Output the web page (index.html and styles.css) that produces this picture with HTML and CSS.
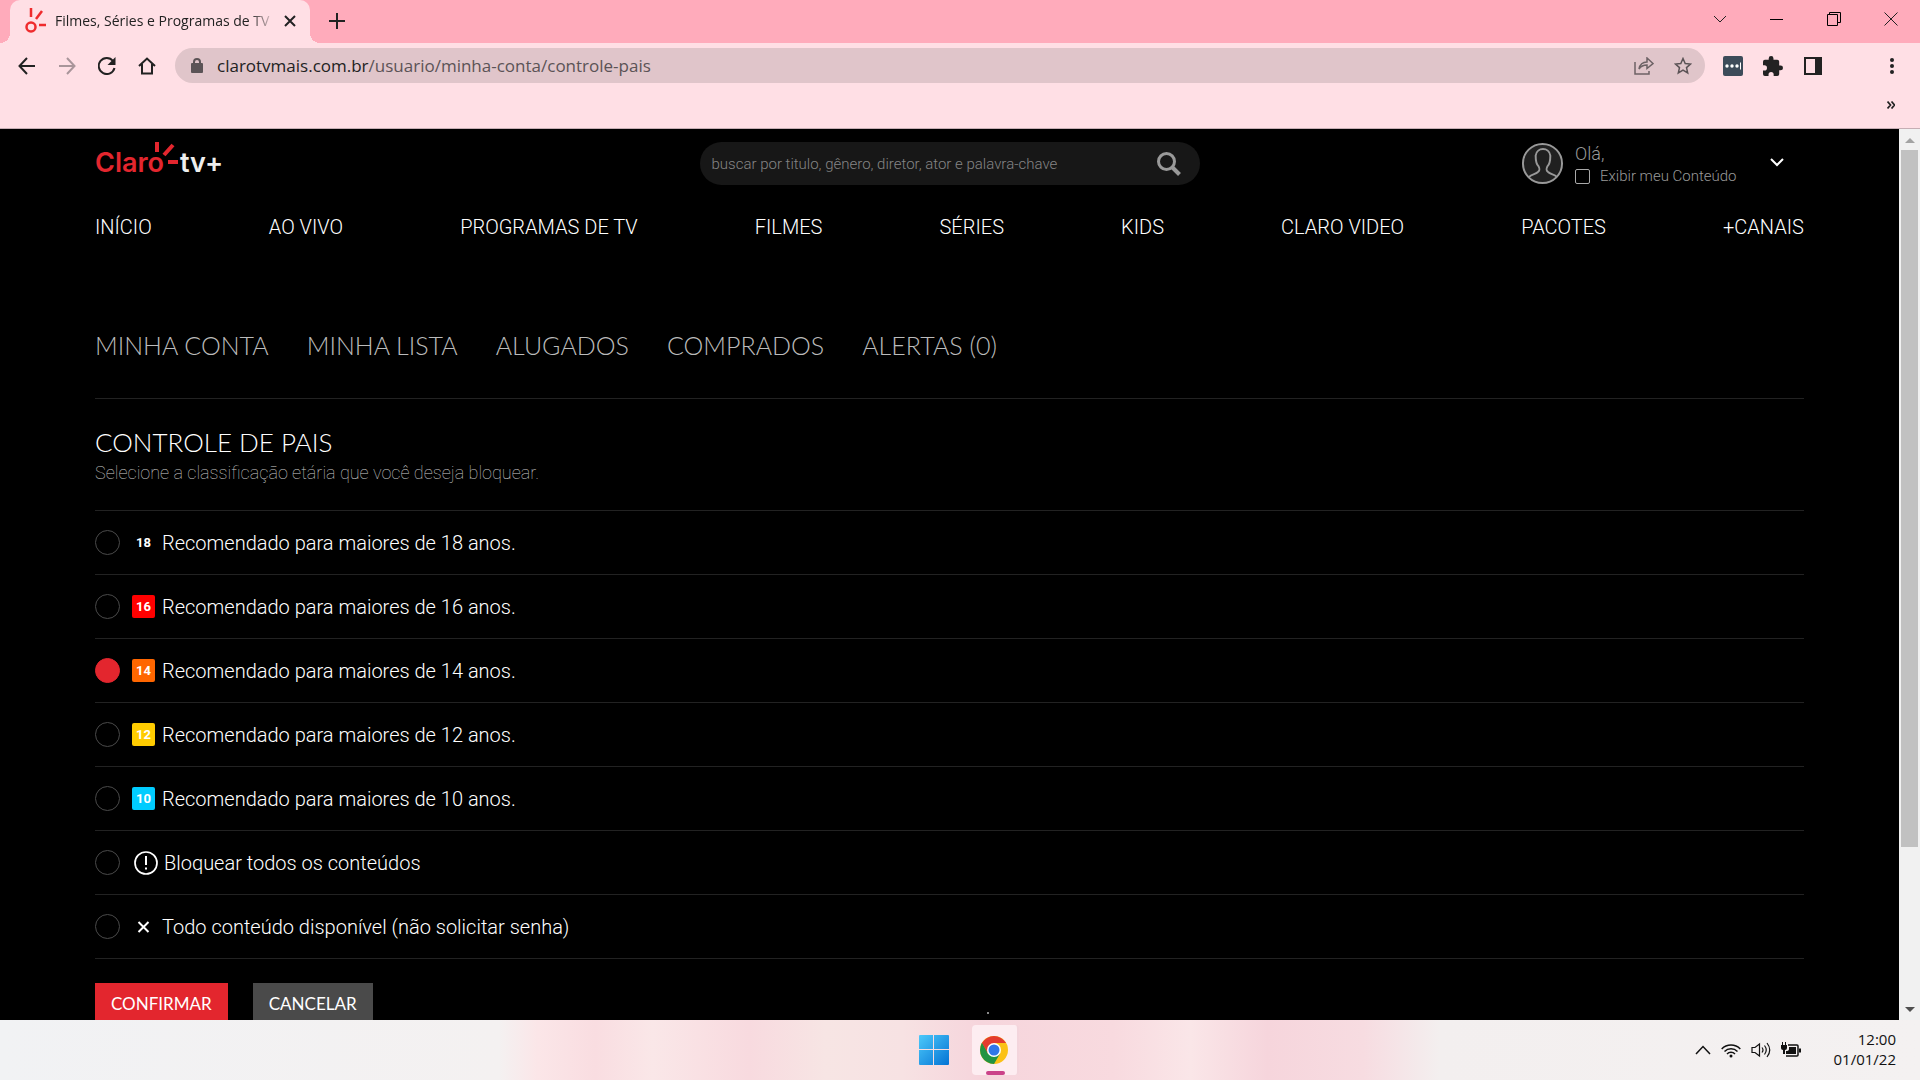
FILE: index.html
```html
<!DOCTYPE html>
<html lang="pt-BR">
<head>
<meta charset="utf-8">
<title>Controle de pais</title>
<link rel="stylesheet" href="styles.css">
</head>
<body>
<div class="desktop">
  <header class="browser">
    <div class="tabstrip">
      <div class="tab">
        <svg class="favicon" width="22" height="28" viewBox="0 0 22 28" fill="none" stroke="#ef2b2d" stroke-width="2.500"><circle cx="6" cy="20" r="4.500"/><path d="M6 1v9M11 12l6-8M14 18h7"/></svg>
        <span class="tab-title">Filmes, Séries e Programas de TV</span>
        <button class="plain" aria-label="Fechar guia"><svg width="12" height="12" viewBox="0 0 12 12" stroke="#222" stroke-width="2"><path d="M1 1l10 10M11 1L1 11"/></svg></button>
      </div>
      <button class="plain new-tab" aria-label="Nova guia"><svg width="16" height="16" viewBox="0 0 16 16" stroke="#222" stroke-width="2"><path d="M8 0v16M0 8h16"/></svg></button>
      <div class="window-controls">
        <button class="plain" aria-label="Pesquisar guias"><svg width="14" height="14" viewBox="0 0 14 14" fill="none" stroke="#222"><path d="M1 4l6 6 6-6"/></svg></button>
        <button class="plain" aria-label="Minimizar"><svg width="14" height="14" viewBox="0 0 14 14" stroke="#000"><path d="M0 7.500h13"/></svg></button>
        <button class="plain" aria-label="Restaurar"><svg width="14" height="14" viewBox="0 0 14 14" fill="none" stroke="#000"><path d="M.5 2.500h10v11H.5zM2.500 2.500v-2h11v10h-3"/></svg></button>
        <button class="plain" aria-label="Fechar"><svg width="14" height="14" viewBox="0 0 14 14" stroke="#222"><path d="M.5.500l13 13M13.500.500l-13 13"/></svg></button>
      </div>
    </div>
    <div class="toolbar">
      <div class="nav-buttons">
        <button class="plain" aria-label="Voltar"><svg width="18" height="18" viewBox="0 0 18 18" fill="none" stroke="#222" stroke-width="2"><path d="M17 9H2M9 1L1.500 9 9 17"/></svg></button>
        <button class="plain" aria-label="Avançar"><svg width="18" height="18" viewBox="0 0 18 18" fill="none" stroke="#a9959a" stroke-width="2"><path d="M1 9h15M9 1l7.500 8L9 17"/></svg></button>
        <button class="plain" aria-label="Recarregar"><svg width="18" height="18" viewBox="0 0 18 18" fill="none" stroke="#222" stroke-width="2"><path d="M15 4a8 8 0 1 0 1.500 7"/><path fill="#222" stroke="none" d="M17.500 0v8h-8z"/></svg></button>
        <button class="plain" aria-label="Página inicial"><svg width="18" height="18" viewBox="0 0 18 18" fill="none" stroke="#222" stroke-width="2"><path d="M1 9l8-7.500L17 9M4 7v9.500h10V7"/></svg></button>
      </div>
      <div class="omnibox">
        <svg width="12" height="16" viewBox="0 0 12 16"><rect y="5" width="12" height="10" rx="1" fill="#5b5356"/><path d="M3 6V4a3 3 0 0 1 6 0v2" fill="none" stroke="#5b5356" stroke-width="2"/></svg>
        <span class="url"><b>clarotvmais.com.br</b>/usuario/minha-conta/controle-pais</span>
        <button class="plain" aria-label="Compartilhar"><svg width="20" height="18" viewBox="0 0 20 18" fill="none" stroke="#6d6265" stroke-width="1.500"><path d="M1 5v12h14v-3M5 12c1-5 4-7 8-7V1l6 5.500-6 5V8c-4 0-6 1-8 4z"/></svg></button>
        <button class="plain" aria-label="Favoritar"><svg width="18" height="18" viewBox="0 0 18 18" fill="none" stroke="#5b5356" stroke-width="1.500"><path d="M9 1.500l2.200 5 5.300.5-4 3.600 1.200 5.400L9 13.200 4.300 16l1.200-5.400-4-3.600 5.300-.5z"/></svg></button>
      </div>
      <div class="extensions">
        <button class="plain" aria-label="Gerenciador de senhas"><svg width="20" height="20" viewBox="0 0 20 20"><rect width="20" height="20" rx="2" fill="#3d4b59"/><g fill="#fff"><circle cx="4" cy="10" r="1.700"/><circle cx="9" cy="10" r="1.700"/><circle cx="14" cy="10" r="1.700"/><path d="M17 6.500h1v7h-1z"/></g></svg></button>
        <button class="plain" aria-label="Extensões"><svg width="20" height="20" viewBox="2 1 21 21" fill="#222"><path d="M20.500 11H19V7a2 2 0 0 0-2-2h-4V3.500a2.500 2.500 0 0 0-5 0V5H4a2 2 0 0 0-2 2v3.800h1.500a2.700 2.700 0 0 1 0 5.400H2V20a2 2 0 0 0 2 2h3.800v-1.500a2.700 2.700 0 0 1 5.400 0V22H17a2 2 0 0 0 2-2v-4h1.500a2.500 2.500 0 0 0 0-5z"/></svg></button>
        <button class="plain" aria-label="Painel lateral"><svg width="20" height="20" viewBox="0 0 20 20"><path fill="#222" fill-rule="evenodd" d="M1 1h18v18H1zM3 3v14h9V3z"/></svg></button>
        <button class="plain menu" aria-label="Menu"><svg width="6" height="18" viewBox="0 0 6 18" fill="#222"><circle cx="3" cy="3" r="2"/><circle cx="3" cy="9" r="2"/><circle cx="3" cy="15" r="2"/></svg></button>
      </div>
    </div>
    <div class="bookmarks"><button class="plain" aria-label="Mais favoritos"><svg width="8" height="8" viewBox="0 0 8 8" fill="none" stroke="#222" stroke-width="1.700"><path d="M.5.500L3.500 4l-3 3.500M4.500.500L7.500 4l-3 3.500"/></svg></button></div>
  </header>

  <div class="viewport">
    <div class="page">
      <div class="site-header">
        <a class="logo" href="#" aria-label="Claro tv+">
          <svg width="136" height="43" viewBox="0 0 136 43"><text class="logo-claro" x="0" y="30">Claro</text><text class="logo-tv" x="85" y="30">tv+</text><path d="M62 0v10M69 13l9-10M73 20h10" stroke="#e3262e" stroke-width="4"/></svg>
        </a>
        <form class="search">
          <input type="search" aria-label="Buscar" placeholder="buscar por titulo, gênero, diretor, ator e palavra-chave">
          <button class="plain" type="button" aria-label="Buscar"><svg width="24" height="24" viewBox="0 0 24 24" fill="none" stroke="#999"><circle cx="9.500" cy="9.500" r="8" stroke-width="3"/><path d="M15.500 15.500l7 7" stroke-width="4"/></svg></button>
        </form>
        <div class="user">
          <svg width="43" height="43" viewBox="0 0 44 44"><circle cx="22" cy="22" r="20" fill="#202020" stroke="#999" stroke-width="2"/><path d="M8 36c3-3 7-3 9-5 3-2 2-4 1-6-3-3-3-7-3-11 1-9 14-9 15 0 0 4 0 8-3 11-1 2-2 4 1 6 2 2 6 2 9 5" fill="none" stroke="#999" stroke-width="2"/></svg>
          <div class="user-text">
            <span class="hello">Olá,</span>
            <label class="show-mine"><input type="checkbox">Exibir meu Conteúdo</label>
          </div>
          <button class="plain" aria-label="Abrir menu do usuário"><svg width="14" height="10" viewBox="0 0 14 10" fill="none" stroke="#fff" stroke-width="2"><path d="M1 2l6 6 6-6"/></svg></button>
        </div>
      </div>
      <nav class="main-nav">
        <a href="#">INÍCIO</a><a href="#">AO VIVO</a><a href="#">PROGRAMAS DE TV</a><a href="#">FILMES</a><a href="#">SÉRIES</a><a href="#">KIDS</a><a href="#">CLARO VIDEO</a><a href="#">PACOTES</a><a href="#">+CANAIS</a>
      </nav>
      <nav class="account-nav">
        <a href="#">MINHA CONTA</a><a href="#">MINHA LISTA</a><a href="#">ALUGADOS</a><a href="#">COMPRADOS</a><a href="#">ALERTAS (0)</a>
      </nav>
      <main>
        <h1>CONTROLE DE PAIS</h1>
        <p class="intro">Selecione a classificação etária que você deseja bloquear.</p>
        <form>
          <div class="ratings" role="radiogroup" aria-label="Classificação etária">
            <label class="rating"><input type="radio" name="age"><span class="badge">18</span>Recomendado para maiores de 18 anos.</label>
            <label class="rating"><input type="radio" name="age"><span class="badge age-16">16</span>Recomendado para maiores de 16 anos.</label>
            <label class="rating"><input type="radio" name="age" checked><span class="badge age-14">14</span>Recomendado para maiores de 14 anos.</label>
            <label class="rating"><input type="radio" name="age"><span class="badge age-12">12</span>Recomendado para maiores de 12 anos.</label>
            <label class="rating"><input type="radio" name="age"><span class="badge age-10">10</span>Recomendado para maiores de 10 anos.</label>
            <label class="rating"><input type="radio" name="age"><svg class="alert" width="24" height="24" viewBox="0 0 24 24" fill="none" stroke="#fff"><circle cx="12" cy="12" r="11" stroke-width="1.700"/><path d="M12 5v9M12 16.500v2" stroke-width="2"/></svg>Bloquear todos os conteúdos</label>
            <label class="rating"><input type="radio" name="age"><svg class="cross" width="23" height="23" viewBox="0 0 23 23" stroke="#fff" stroke-width="2"><path d="M6.500 7l10 10M16.500 7l-10 10"/></svg>Todo conteúdo disponível (não solicitar senha)</label>
          </div>
          <div class="actions">
            <button class="confirm" type="button">CONFIRMAR</button>
            <button class="cancel" type="button">CANCELAR</button>
          </div>
        </form>
      </main>
      <i class="speck"></i>
    </div>
    <div class="scrollbar">
      <svg width="10" height="5" viewBox="0 0 10 5"><path d="M0 5l5-5 5 5z" fill="#a3a3a3"/></svg>
      <div class="track"><div class="thumb"></div></div>
      <svg width="10" height="5" viewBox="0 0 10 5"><path d="M0 0l5 5 5-5z" fill="#505050"/></svg>
    </div>
  </div>

  <footer class="taskbar">
    <div class="apps">
      <button class="plain app" aria-label="Iniciar"><svg width="30" height="30" viewBox="0 0 30 30"><defs><linearGradient id="win" x1="0" y1="0" x2="30" y2="30" gradientUnits="userSpaceOnUse"><stop offset="0" stop-color="#4cc9fa"/><stop offset="1" stop-color="#0473d4"/></linearGradient></defs><path fill="url(#win)" d="M1 0h13v14H0V1a1 1 0 0 1 1-1zM15 0h14a1 1 0 0 1 1 1v13H15zM0 15h14v15H1a1 1 0 0 1-1-1zM15 15h15v14a1 1 0 0 1-1 1H15z"/></svg></button>
      <button class="plain app active" aria-label="Google Chrome"><svg width="28" height="28" viewBox="0 0 28 28"><circle cx="14" cy="14" r="14" fill="#fbc116"/><path d="M14 14L1.900 7A14 14 0 0 1 26.100 7H14z" fill="#e33b2e"/><path d="M1.900 7A14 14 0 0 0 14 28l6.100-10.500L14 14l-6.100 3.500z" fill="#229342"/><path d="M1.900 7l6 10.500L14 7z" fill="#e33b2e"/><path d="M1.900 7l6 10.500L14 21 1 12z" fill="#229342"/><circle cx="14" cy="14" r="7" fill="#fff"/><circle cx="14" cy="14" r="5.500" fill="#3077e8"/></svg></button>
    </div>
    <div class="tray">
      <svg width="16" height="10" viewBox="0 0 16 10" fill="none" stroke="#111" stroke-width="1.500"><path d="M1 9l7-7.500L15 9"/></svg>
      <svg width="20" height="15" viewBox="0 0 20 15" fill="none" stroke="#111" stroke-width="1.500"><path d="M.7 6a13 13 0 0 1 18.600 0M3.500 8.500a9.200 9.200 0 0 1 13 0M6 11a5.600 5.600 0 0 1 8 0"/><circle cx="10" cy="13" r="1.500" fill="#111" stroke="none"/></svg>
      <svg width="20" height="16" viewBox="0 0 20 16" fill="none" stroke="#111" stroke-width="1.200"><path d="M1 5.500h3L8.500 2v12L4 10.500H1zM11 5.500q2 2.500 0 5M13.500 3.500q3.500 4.500 0 9M16 1q5.500 7 0 14"/></svg>
      <svg width="20" height="16" viewBox="0 0 20 16" fill="#111"><path d="M0 3h1V0h1v3h2V0h1v3h1v3q0 2-2 2v4H2V8Q0 8 0 6z"/><path fill="none" stroke="#111" stroke-width="1.500" d="M7 3h9q1 0 1 1v9q0 1-1 1H5"/><path d="M8 5h7v7H5V9q3 0 3-2zM18 6.500h2v4h-2z"/></svg>
      <time class="clock"><span>12:00</span><span>01/01/22</span></time>
    </div>
  </footer>
</div>
</body>
</html>
```

FILE: styles.css
```css
* { box-sizing: border-box; }

body { margin: 0; font-family: Roboto, sans-serif; }

a { color: inherit; text-decoration: none; }

svg { display: block; flex: none; }

.plain {
  display: flex;
  align-items: center;
  justify-content: center;
  padding: 0;
  border: 0;
  background: none;
}

.desktop { display: flex; flex-direction: column; height: 100vh; }

/* Browser frame */
.browser {
  flex: none;
  background: #ffdfe5;
  border-bottom: 1px solid #c6aeb4;
  font-family: "Open Sans", sans-serif;
}

.tabstrip { display: flex; height: 43px; padding-left: 10px; background: #ffabbb; }

.tab {
  position: relative;
  display: flex;
  align-items: center;
  gap: 8px;
  width: 300px;
  padding: 0 14px 2px 15px;
  border-radius: 10px 10px 0 0;
  background: #ffdfe5;
}

.tab::before,
.tab::after {
  content: "";
  position: absolute;
  bottom: 0;
  width: 10px;
  height: 10px;
}

.tab::before { left: -10px; background: radial-gradient(circle at 0 0, #ffabbb 10px, #ffdfe5 10px); }
.tab::after { right: -10px; background: radial-gradient(circle at 100% 0, #ffabbb 10px, #ffdfe5 10px); }

.tab-title {
  flex: 1;
  overflow: hidden;
  white-space: nowrap;
  font-size: 14px;
  color: #222;
  -webkit-mask-image: linear-gradient(90deg, #000 88%, transparent);
  mask-image: linear-gradient(90deg, #000 88%, transparent);
}

.new-tab { width: 54px; padding-bottom: 1px; }

.window-controls { display: flex; margin-left: auto; padding: 0 1px 6px 0; }
.window-controls .plain { width: 57px; }

.toolbar { display: flex; align-items: center; padding-top: 5px; }

.nav-buttons { display: flex; gap: 22px; padding: 0 19px 0 18px; }

.omnibox {
  display: flex;
  flex: 1;
  align-items: center;
  gap: 20px;
  height: 35px;
  padding: 0 13px 0 16px;
  border-radius: 18px;
  background: #e0c5ca;
}

.url { flex: 1; margin-left: -6px; font-size: 17px; color: #5b5356; }
.url b { font-weight: 400; color: #222; }

.extensions { display: flex; align-items: center; gap: 20px; padding: 0 25px 0 18px; }
.menu { margin-left: 46px; }

.bookmarks { display: flex; justify-content: flex-end; align-items: center; height: 45px; padding: 0 25px 1px 0; }

/* Site */
.viewport { display: flex; flex: 1; min-height: 0; background: #000; }

.page { position: relative; flex: 1; overflow: hidden; padding: 13px 95px 0; color: #fff; }

.site-header { display: grid; grid-template-columns: 1fr 500px 1fr; }

.logo-claro, .logo-tv { font: 600 27px Inter, sans-serif; }
.logo-claro { fill: #e3262e; }
.logo-tv { fill: #eee; }

.search {
  display: flex;
  align-items: center;
  height: 43px;
  padding: 0 19px 0 12px;
  border-radius: 22px;
  background: #171717;
}

.search input {
  flex: 1;
  padding: 0;
  border: 0;
  outline: 0;
  background: none;
  font: 300 15px Roboto, sans-serif;
  color: #ddd;
}

.search input::placeholder { color: #858585; }

.user { display: flex; justify-content: flex-end; gap: 11px; padding-right: 20px; }
.user-text { display: flex; flex-direction: column; width: 184px; color: #999; }
.hello { font-size: 18px; font-weight: 300; line-height: 24px; }
.show-mine { display: flex; align-items: center; gap: 10px; font-size: 15px; font-weight: 300; line-height: 20px; }

.show-mine input {
  appearance: none;
  width: 15px;
  height: 15px;
  margin: 0;
  border: 1px solid #aaa;
  border-radius: 2px;
}

.user .plain { height: 40px; }

.main-nav {
  display: flex;
  justify-content: space-between;
  margin-top: 29px;
  font-size: 20px;
  font-weight: 300;
  line-height: 24px;
}

.account-nav {
  display: flex;
  gap: 38px;
  margin-top: 90px;
  padding-bottom: 37px;
  border-bottom: 1px solid #222;
  font: 300 25px/32px Lato, sans-serif;
  color: #bbb;
}

h1 { margin: 27px 0 0; font: 300 26px/32px Lato, sans-serif; }

.intro { margin: 3px 0 25px; font-size: 18px; font-weight: 100; line-height: 24px; color: #ccc; }

.ratings { border-top: 1px solid #222; }

.rating {
  display: flex;
  align-items: center;
  height: 64px;
  border-bottom: 1px solid #222;
  font-size: 20px;
  font-weight: 300;
}

.rating input {
  appearance: none;
  width: 25px;
  height: 25px;
  margin: 0 12px 0 0;
  border: 1px solid #4a4a4a;
  border-radius: 50%;
}

.rating input:checked { border-color: #e3262e; background: #e3262e; }

.badge {
  width: 23px;
  height: 23px;
  margin-right: 7px;
  border-radius: 2px;
  font: 700 13px/23px Roboto, sans-serif;
  text-align: center;
}

.age-16 { background: #f00; }
.age-14 { background: #f60; }
.age-12 { background: #fc0; }
.age-10 { background: #0cf; }

.alert { margin: 0 6px 0 2px; }
.cross { margin-right: 7px; }

.actions { display: flex; gap: 25px; margin-top: 24px; }

.actions button {
  height: 40px;
  padding: 0 16px;
  border: 0;
  font: 400 17px Lato, sans-serif;
  color: #fff;
}

.confirm { background: #e3262e; }
.cancel { background: #4a4a4a; }

.speck { position: absolute; left: 52%; bottom: 6px; width: 2px; height: 2px; background: #888; }

.scrollbar {
  display: flex;
  flex-direction: column;
  align-items: center;
  width: 21px;
  padding: 9px 2px 8px;
  background: #f1f1f1;
}

.track { flex: 1; align-self: stretch; padding: 7px 0; }
.thumb { height: 82%; background: #c1c1c1; }

/* Taskbar */
.taskbar {
  display: grid;
  grid-template-columns: 1fr auto 1fr;
  align-items: center;
  height: 60px;
  background: linear-gradient(90deg, #f1f2f4 0, #f4f1f1 26%, #fbe6e8 28%, #f9dde1 31%, #fae7e8 34%, #f8dadf 39%, #f7e5e4 43%, #f7e2e3 47%, #f6d5dc 51%, #f8dadf 58%, #fae6e8 62%, #f6d5dc 66%, #f7dce1 71%, #f3efef 75%, #f4f1f1 100%);
}

.apps { display: flex; grid-column: 2; gap: 14px; padding-left: 9px; }
.app { width: 47px; height: 50px; }
.active { position: relative; border-radius: 4px; background: #fdedf1; border-right: 2px solid #f3d5dc; }

.active::after {
  content: "";
  position: absolute;
  bottom: 0;
  left: 14px;
  width: 19px;
  height: 4px;
  border-radius: 2px;
  background: #cb4289;
}

.tray { display: flex; align-items: center; justify-content: flex-end; gap: 10px; padding-right: 24px; }

.clock {
  display: flex;
  flex-direction: column;
  margin-left: 23px;
  padding-bottom: 2px;
  font: 15px/20px "Open Sans", sans-serif;
  text-align: right;
  color: #111;
}
```
